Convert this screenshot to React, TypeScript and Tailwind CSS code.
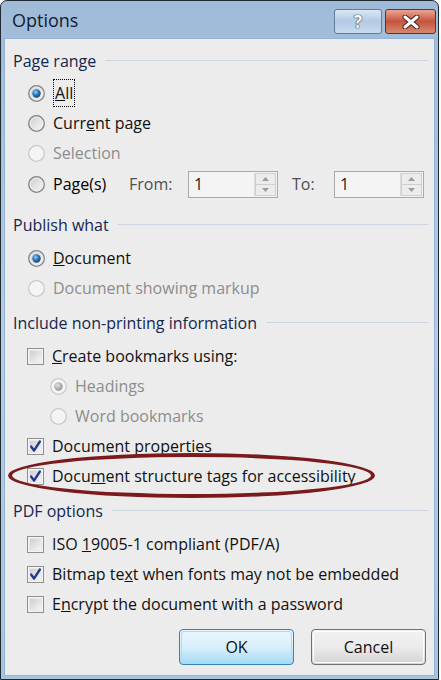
import React from 'react';

const FONT = { fontFamily: '"Open Sans", "Noto Sans", sans-serif' };

const Radio: React.FC<{ checked?: boolean; disabled?: boolean }> = ({ checked, disabled }) => (
  <svg width="17" height="17" viewBox="0 0 17 17" className="shrink-0">
    <defs>
      <linearGradient id="rfill" x1="0" y1="0" x2="1" y2="1">
        <stop offset="0" stopColor="#c9c9c9" />
        <stop offset="1" stopColor="#fbfbfb" />
      </linearGradient>
      <radialGradient id="rdot" cx="0.4" cy="0.35" r="0.7">
        <stop offset="0" stopColor="#9fd3f7" />
        <stop offset="0.45" stopColor="#2f7dc4" />
        <stop offset="1" stopColor="#0f3f6e" />
      </radialGradient>
      <radialGradient id="rdotd" cx="0.4" cy="0.35" r="0.7">
        <stop offset="0" stopColor="#e2e2e2" />
        <stop offset="1" stopColor="#8c8c8c" />
      </radialGradient>
    </defs>
    <circle cx="8.5" cy="8.5" r="7.8" fill={disabled ? '#f4f4f4' : 'url(#rfill)'} stroke={disabled ? '#cacaca' : '#868686'} strokeWidth="1.3" />
    <circle cx="8.5" cy="8.5" r="6.2" fill="none" stroke={disabled ? '#f7f7f7' : '#ededed'} strokeWidth="1" />
    {checked && <circle cx="8.5" cy="8.5" r="4.2" fill={disabled ? 'url(#rdotd)' : 'url(#rdot)'} />}
  </svg>
);

const Check: React.FC<{ checked?: boolean }> = ({ checked }) => (
  <svg width="17" height="17" viewBox="0 0 17 17" className="shrink-0">
    <defs>
      <linearGradient id="cfill" x1="0" y1="0" x2="1" y2="1">
        <stop offset="0" stopColor="#cdcdcd" />
        <stop offset="1" stopColor="#f7f7f7" />
      </linearGradient>
    </defs>
    <rect x="0.5" y="0.5" width="16" height="16" fill="#f4f4f4" stroke="#8e8f8f" />
    <rect x="2.5" y="2.5" width="12" height="12" fill="url(#cfill)" stroke="#e8e8e8" />
    {checked && (
      <path d="M4.2 8.6 L7 12.6 L12.8 3.6" fill="none" stroke="#21378f" strokeWidth="2.4" strokeLinejoin="round" strokeLinecap="round" />
    )}
  </svg>
);

const Header: React.FC<{ label: string; className?: string }> = ({ label, className }) => (
  <div className={`flex items-center h-[28px] pl-[8px] pr-[6px] ${className ?? ''}`}>
    <span className="text-[#15264f] whitespace-nowrap">{label}</span>
    <div className="flex-1 ml-[9px] h-[2px] border-t border-[#cdd6e0] border-b-white" />
  </div>
);

const Row: React.FC<{ indent: string; disabled?: boolean; icon: React.ReactNode; children: React.ReactNode; className?: string }> = ({
  indent,
  disabled,
  icon,
  children,
  className,
}) => (
  <div className={`flex items-center h-[30px] gap-[8px] ${indent} ${disabled ? 'text-[#8d8d8d]' : 'text-[#111]'} ${className ?? ''}`}>
    {icon}
    <span className="whitespace-nowrap">{children}</span>
  </div>
);

const Spin: React.FC = () => (
  <div className="flex w-[90px] h-[27px] border border-[#a9a9a9] bg-[#f4f4f4]">
    <div className="flex-1 flex items-center pl-[5px] text-[#222]">1</div>
    <div className="w-[22px] flex flex-col border-l border-[#dadada] my-[1px] mr-[1px]">
      <div className="flex-1 flex items-center justify-center bg-[#ececec] border border-[#cfcfcf]">
        <svg width="7" height="4" viewBox="0 0 7 4"><path d="M0 4 L3.5 0 L7 4Z" fill="#9c9c9c" /></svg>
      </div>
      <div className="flex-1 flex items-center justify-center bg-[#ececec] border border-t-0 border-[#cfcfcf]">
        <svg width="7" height="4" viewBox="0 0 7 4"><path d="M0 0 L3.5 4 L7 0Z" fill="#9c9c9c" /></svg>
      </div>
    </div>
  </div>
);

export default function App() {
  return (
    <div className="relative w-[441px] h-[680px] bg-white text-[16px] leading-none" style={FONT}>
      <div className="w-[439px] h-[680px] flex flex-col border border-[#1f2a33] rounded-t-[7px] bg-gradient-to-b from-[#9fbbd8] via-[#b4cce5] to-[#a9c4e0]">
        {/* title bar */}
        <div className="h-[37px] flex items-center pl-[11px] pr-[2px]">
          <span className="text-[18px] text-[#101c30] flex-1">Options</span>
          <div className="flex gap-[3px] self-start mt-[8px]">
            <div className="w-[48px] h-[25px] rounded-[3px] border border-[#5f7c9c] bg-gradient-to-b from-[#dae7f4] via-[#b2cae3] to-[#c7dbef] flex items-center justify-center">
              <span className="text-white text-[17px] font-bold leading-none" style={{ textShadow: '0 0 1px #2a3a4a, 0 0 1px #2a3a4a, 0 0 1px #2a3a4a' }}>?</span>
            </div>
            <div className="w-[51px] h-[25px] rounded-[3px] border border-[#6b2a22] bg-gradient-to-b from-[#e8a593] via-[#c6533d] to-[#d58a6f] flex items-center justify-center">
              <svg width="20" height="14" viewBox="0 0 20 14">
                <path d="M4 2 L16 12 M16 2 L4 12" stroke="#4a2018" strokeWidth="5" strokeLinecap="round" />
                <path d="M4 2 L16 12 M16 2 L4 12" stroke="#ffffff" strokeWidth="3" strokeLinecap="round" />
              </svg>
            </div>
          </div>
        </div>

        {/* client area */}
        <div className="flex-1 mx-[3px] mb-[3px] bg-[#ececec] border border-[#95b3d3] flex flex-col pt-[8px]">
          <Header label="Page range" />
          <Row indent="pl-[23px] mt-[3px]" icon={<Radio checked />}>
            <span className="border border-dotted border-black px-[1px] py-[2px]">
              <u>A</u>ll
            </span>
          </Row>
          <Row indent="pl-[23px]" icon={<Radio />}>
            Curr<u>e</u>nt page
          </Row>
          <Row indent="pl-[23px]" disabled icon={<Radio disabled />}>
            Selection
          </Row>
          <div className="flex items-center h-[30px] pl-[23px] mt-[1px]">
            <div className="flex items-center gap-[8px] w-[101px]">
              <Radio />
              <span>Page(s)</span>
            </div>
            <span className="text-[#4f4f4f] w-[59px]">From:</span>
            <Spin />
            <span className="text-[#4f4f4f] ml-[14px] w-[42px]">To:</span>
            <Spin />
          </div>

          <Header label="Publish what" className="mt-[12px]" />
          <Row indent="pl-[23px] mt-[4px]" icon={<Radio checked />}>
            <u>D</u>ocument
          </Row>
          <Row indent="pl-[23px]" disabled icon={<Radio disabled />}>
            Document showing markup
          </Row>

          <Header label="Include non-printing information" className="mt-[6px]" />
          <Row indent="pl-[22px] mt-[4px]" icon={<Check />}>
            <u>C</u>reate bookmarks using:
          </Row>
          <Row indent="pl-[45px]" disabled icon={<Radio checked disabled />}>
            Headings
          </Row>
          <Row indent="pl-[45px]" disabled icon={<Radio disabled />}>
            Word bookmarks
          </Row>
          <Row indent="pl-[22px]" icon={<Check checked />}>
            Document properties
          </Row>
          <Row indent="pl-[22px]" icon={<Check checked />}>
            Docu<u>m</u>ent structure tags for accessibility
          </Row>

          <Header label="PDF options" className="mt-[6px]" />
          <Row indent="pl-[22px] mt-[4px]" icon={<Check />}>
            ISO <u>1</u>9005-1 compliant (PDF/A)
          </Row>
          <Row indent="pl-[22px]" icon={<Check checked />}>
            Bitmap te<u>x</u>t when fonts may not be embedded
          </Row>
          <Row indent="pl-[22px]" icon={<Check />}>
            E<u>n</u>crypt the document with a password
          </Row>

          <div className="flex justify-end gap-[17px] pr-[8px] mt-[10px]">
            <div className="w-[115px] h-[36px] rounded-[4px] border border-[#3c7fb1] bg-gradient-to-b from-[#eaf6fd] via-[#d9f0fc] to-[#a7d9f5] p-[1px]">
              <div className="w-full h-full rounded-[3px] border border-[#9fe0fb] flex items-center justify-center text-[#111]">OK</div>
            </div>
            <div className="w-[115px] h-[36px] rounded-[4px] border border-[#707070] bg-gradient-to-b from-[#f2f2f2] via-[#ebebeb] to-[#d4d4d4] p-[1px]">
              <div className="w-full h-full rounded-[3px] border border-[#fcfcfc] flex items-center justify-center text-[#111]">Cancel</div>
            </div>
          </div>
        </div>
      </div>

      {/* hand-drawn highlight ellipse */}
      <div className="absolute left-[8px] top-[453px] w-[367px] h-[45px] rounded-[50%] border-[4px] border-[#7a1a1c]" />
    </div>
  );
}
